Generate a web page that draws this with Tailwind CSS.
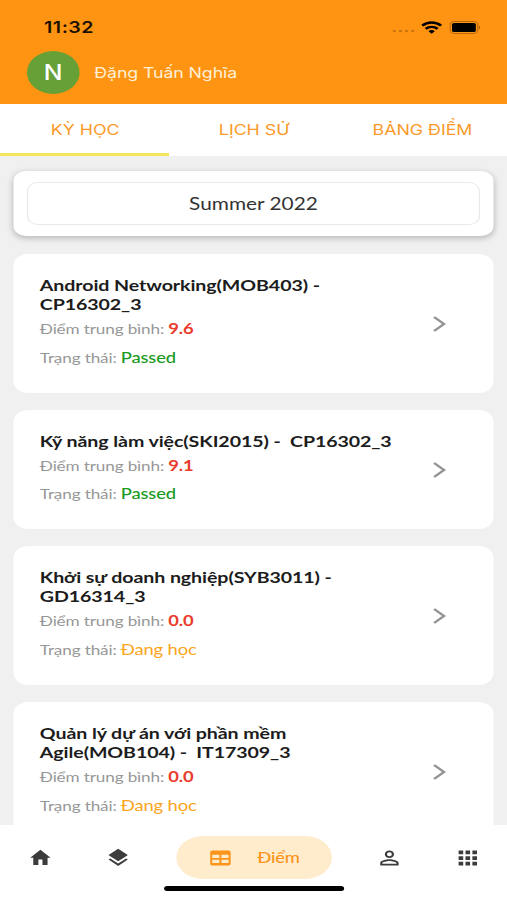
<!DOCTYPE html>
<html lang="vi">
<head>
<meta charset="utf-8">
<title>Điểm</title>
<script src="https://cdn.jsdelivr.net/npm/@tailwindcss/browser@4"></script>
</head>
<body class="w-[507px] h-[900px] overflow-hidden bg-[#f0f0f0]">
<div class="w-[414px] h-[900px] origin-top-left scale-x-[1.2246] flex flex-col overflow-hidden bg-[#f0f0f0] font-['Lato','Noto_Sans',sans-serif]">
  <header class="h-[104px] shrink-0 bg-[#ff9412] font-['Inter','Roboto',sans-serif]">
    <div class="h-[51px] flex items-center pt-[3px] pl-[36px] pr-[20px]">
      <span class="text-[16px] leading-[20px] font-semibold text-[#1c0f00] tracking-[0.4px]">11:32</span>
      <svg class="ml-auto mt-[8px] mr-[5.5px] w-[19px] h-[4px]" viewBox="0 0 19 4" fill="#c9740f"><circle cx="2" cy="2" r="1.3"/><circle cx="7" cy="2" r="1.3"/><circle cx="12" cy="2" r="1.3"/><circle cx="17" cy="2" r="1.3"/></svg>
      <svg class="w-[17px] h-[13px] mr-[6px]" viewBox="0 0 17 13" fill="none" stroke="#000" stroke-width="2.4"><path d="M.8 4.7a10.8 10.8 0 0 1 15.4 0"/><path d="M3.6 7.9a6.9 6.9 0 0 1 9.8 0"/><path d="M8.5 12.8 5.9 10.3a3.7 3.7 0 0 1 5.2 0z" fill="#000" stroke="none"/></svg>
      <svg class="mr-[0.7px] w-[26px] h-[13px]" viewBox="0 0 27 13" preserveAspectRatio="none"><rect x=".6" y=".6" width="23.4" height="11.8" rx="3.4" fill="none" stroke="#b96a0c"/><rect x="2.2" y="2" width="20.2" height="9" rx="1.6" fill="#000"/><path d="M25 4.6v3.8c1.4-.5 1.4-3.3 0-3.8z" fill="#a55f0b"/></svg>
    </div>
    <div class="flex items-center h-[43px] pl-[22px]">
      <div class="w-[42.5px] h-[43px] rounded-full bg-[#67a037] text-white text-[22px] font-medium flex items-center justify-center"><span class="scale-x-[0.92]">N</span></div>
      <span class="ml-[12.5px] text-[14.5px] tracking-[-0.08px] text-[#fff0d5]">Đặng Tuấn Nghĩa</span>
    </div>
  </header>

  <nav class="h-[52px] shrink-0 bg-white grid grid-cols-3 text-center text-[14.5px] leading-[51px] text-[#fb9a2b] font-['Inter','Roboto',sans-serif]">
    <div class="h-[52px] pl-[1px] border-b-[3px] border-[#f3e45c]">KỲ HỌC</div>
    <div class="pl-[1px]">LỊCH SỬ</div>
    <div>BẢNG ĐIỂM</div>
  </nav>

  <main class="flex-1 min-h-0 overflow-hidden px-[11px] pt-[15px]">
    <div class="h-[65px] p-[11px] bg-white rounded-[10px] shadow-[0_2px_6px_rgba(0,0,0,0.25)]">
      <div class="h-full rounded-[9px] border border-[#e9e9e9] flex items-center justify-center text-[17px] text-[#333]">Summer 2022</div>
    </div>

    <div class="mt-[18px] flex flex-col gap-[17px] text-[14px] leading-[28.6px] tracking-[-0.12px] text-[#979797]">
      <article class="h-[139px] shrink-0 bg-white rounded-[12px] pt-[21px] pl-[21.5px] pr-[38px] flex">
        <div class="flex-1">
          <h2 class="mb-[0.5px] text-[16px] leading-[19.2px] tracking-[-0.07px] font-bold text-[#1c1c1c] whitespace-pre">Android Networking(MOB403) -
CP16302_3</h2>
          <p class="h-[28.6px]">Điểm trung bình: <b class="text-[15px] text-[#e93c2c]">9.6</b></p>
          <p class="h-[28.6px]">Trạng thái: <span class="text-[15px] font-medium text-[#1b9a22]">Passed</span></p>
        </div>
        <svg class="self-center -mt-[20px] w-[12px] h-[18px]" viewBox="0 0 12 18" fill="none" stroke="#949494" stroke-width="2.3"><path d="m1.5 2 8 7-8 7"/></svg>
      </article>
      <article class="h-[119px] shrink-0 bg-white rounded-[12px] pt-[21px] pl-[21.5px] pr-[38px] flex">
        <div class="flex-1">
          <h2 class="mb-[0.5px] text-[16px] leading-[19.2px] tracking-[-0.07px] font-bold text-[#1c1c1c] whitespace-pre">Kỹ năng làm việc(SKI2015) -  CP16302_3</h2>
          <p class="h-[28.6px]">Điểm trung bình: <b class="text-[15px] text-[#e93c2c]">9.1</b></p>
          <p class="h-[28.6px]">Trạng thái: <span class="text-[15px] font-medium text-[#1b9a22]">Passed</span></p>
        </div>
        <svg class="self-center -mt-[20px] w-[12px] h-[18px]" viewBox="0 0 12 18" fill="none" stroke="#949494" stroke-width="2.3"><path d="m1.5 2 8 7-8 7"/></svg>
      </article>
      <article class="h-[139px] shrink-0 bg-white rounded-[12px] pt-[21px] pl-[21.5px] pr-[38px] flex">
        <div class="flex-1">
          <h2 class="mb-[0.5px] text-[16px] leading-[19.2px] tracking-[-0.07px] font-bold text-[#1c1c1c] whitespace-pre">Khởi sự doanh nghiệp(SYB3011) -
GD16314_3</h2>
          <p class="h-[28.6px]">Điểm trung bình: <b class="text-[15px] text-[#e93c2c]">0.0</b></p>
          <p class="h-[28.6px]">Trạng thái: <span class="text-[15px] text-[#fba51d]">Đang học</span></p>
        </div>
        <svg class="self-center -mt-[20px] w-[12px] h-[18px]" viewBox="0 0 12 18" fill="none" stroke="#949494" stroke-width="2.3"><path d="m1.5 2 8 7-8 7"/></svg>
      </article>
      <article class="h-[139px] shrink-0 bg-white rounded-[12px] pt-[21px] pl-[21.5px] pr-[38px] flex">
        <div class="flex-1">
          <h2 class="mb-[0.5px] text-[16px] leading-[19.2px] tracking-[-0.07px] font-bold text-[#1c1c1c] whitespace-pre">Quản lý dự án với phần mềm
Agile(MOB104) -  IT17309_3</h2>
          <p class="h-[28.6px]">Điểm trung bình: <b class="text-[15px] text-[#e93c2c]">0.0</b></p>
          <p class="h-[28.6px]">Trạng thái: <span class="text-[15px] text-[#fba51d]">Đang học</span></p>
        </div>
        <svg class="self-center -mt-[20px] w-[12px] h-[18px]" viewBox="0 0 12 18" fill="none" stroke="#949494" stroke-width="2.3"><path d="m1.5 2 8 7-8 7"/></svg>
      </article>
    </div>
  </main>

  <footer class="h-[75px] shrink-0 bg-white pt-[11px] flex flex-col">
    <div class="h-[43px] flex items-center pl-[22.5px] text-[#3c3c3c]">
      <svg class="w-5 h-[21.5px]" viewBox="0 0 24 24" preserveAspectRatio="none" fill="currentColor"><path d="M10 20v-6h4v6h5v-8h3L12 3 2 12h3v8z"/></svg>
      <svg class="w-[21px] h-[21.5px] ml-[43px]" viewBox="0 0 24 24" preserveAspectRatio="none" fill="currentColor"><path d="m11.99 18.54-7.37-5.73L3 14.07l9 7 9-7-1.63-1.27zM12 16l7.36-5.73L21 9l-9-7-9 7 1.63 1.27z"/></svg>
      <div class="ml-[37.5px] w-[127px] h-[43px] rounded-full bg-[#ffeccd] flex items-center pl-[25.5px] text-[#fb9419]">
        <svg class="w-5 h-5" viewBox="0 0 24 24" fill="currentColor"><path fill-rule="evenodd" d="M4 3h16a2 2 0 0 1 2 2v14a2 2 0 0 1-2 2H4a2 2 0 0 1-2-2V5a2 2 0 0 1 2-2zm0 5v4h7V8zm9 0v4h7V8zm-9 6v4h7v-4zm9 0v4h7v-4z"/></svg>
        <span class="ml-[20.5px] text-[15px] tracking-[-0.15px] font-medium">Điểm</span>
      </div>
      <svg class="size-5 ml-[37px]" viewBox="0 0 24 24" fill="currentColor"><path fill-rule="evenodd" d="M12 3a4.5 4.5 0 1 0 0 9 4.5 4.5 0 0 0 0-9zm0 2.1a2.4 2.4 0 1 1 0 4.8 2.4 2.4 0 0 1 0-4.8zM12 13.5c-3 0-9 1.4-9 4.5v3h18v-3c0-3.1-6-4.5-9-4.5zm0 2c2.7 0 6.9 1.3 6.9 2.5v1H5.1v-1c0-1.2 4.2-2.5 6.9-2.5z"/></svg>
      <svg class="size-5 ml-[44px]" viewBox="0 0 24 24" fill="currentColor"><path d="M3 3h4.500v4.500H3zM9.750 3h4.500v4.500h-4.500zM16.500 3h4.500v4.500h-4.500zM3 9.750h4.500v4.500H3zM9.750 9.750h4.500v4.500h-4.500zM16.500 9.750h4.500v4.500h-4.500zM3 16.500h4.500v4.500H3zM9.750 16.500h4.500v4.500h-4.500zM16.500 16.500h4.500v4.500h-4.500z"/></svg>
    </div>
    <div class="mt-[7px] mx-auto w-[147px] h-[5px] rounded-full bg-black"></div>
  </footer>
</div>
</body>
</html>
